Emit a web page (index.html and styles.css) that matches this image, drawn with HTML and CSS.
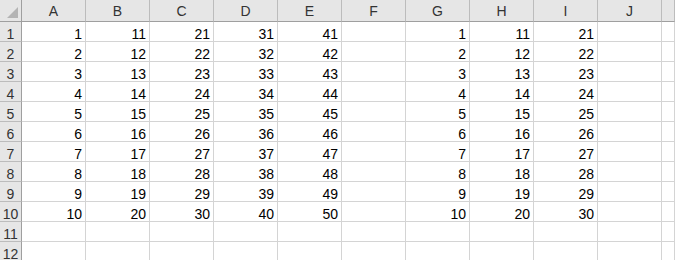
FILE: index.html
```html
<!DOCTYPE html>
<html>
<head>
<meta charset="utf-8">
<link rel="stylesheet" href="styles.css">
</head>
<body>
<div class="sheet">
  <div class="corner"><span class="tri"></span></div>
  <div class="ch">A</div><div class="ch">B</div><div class="ch">C</div><div class="ch">D</div><div class="ch">E</div><div class="ch">F</div><div class="ch">G</div><div class="ch">H</div><div class="ch">I</div><div class="ch">J</div><div class="ch"></div>

  <div class="rh">1</div><div class="c">1</div><div class="c">11</div><div class="c">21</div><div class="c">31</div><div class="c">41</div><div class="c"></div><div class="c">1</div><div class="c">11</div><div class="c">21</div><div class="c"></div><div class="c"></div>
  <div class="rh">2</div><div class="c">2</div><div class="c">12</div><div class="c">22</div><div class="c">32</div><div class="c">42</div><div class="c"></div><div class="c">2</div><div class="c">12</div><div class="c">22</div><div class="c"></div><div class="c"></div>
  <div class="rh">3</div><div class="c">3</div><div class="c">13</div><div class="c">23</div><div class="c">33</div><div class="c">43</div><div class="c"></div><div class="c">3</div><div class="c">13</div><div class="c">23</div><div class="c"></div><div class="c"></div>
  <div class="rh">4</div><div class="c">4</div><div class="c">14</div><div class="c">24</div><div class="c">34</div><div class="c">44</div><div class="c"></div><div class="c">4</div><div class="c">14</div><div class="c">24</div><div class="c"></div><div class="c"></div>
  <div class="rh">5</div><div class="c">5</div><div class="c">15</div><div class="c">25</div><div class="c">35</div><div class="c">45</div><div class="c"></div><div class="c">5</div><div class="c">15</div><div class="c">25</div><div class="c"></div><div class="c"></div>
  <div class="rh">6</div><div class="c">6</div><div class="c">16</div><div class="c">26</div><div class="c">36</div><div class="c">46</div><div class="c"></div><div class="c">6</div><div class="c">16</div><div class="c">26</div><div class="c"></div><div class="c"></div>
  <div class="rh">7</div><div class="c">7</div><div class="c">17</div><div class="c">27</div><div class="c">37</div><div class="c">47</div><div class="c"></div><div class="c">7</div><div class="c">17</div><div class="c">27</div><div class="c"></div><div class="c"></div>
  <div class="rh">8</div><div class="c">8</div><div class="c">18</div><div class="c">28</div><div class="c">38</div><div class="c">48</div><div class="c"></div><div class="c">8</div><div class="c">18</div><div class="c">28</div><div class="c"></div><div class="c"></div>
  <div class="rh">9</div><div class="c">9</div><div class="c">19</div><div class="c">29</div><div class="c">39</div><div class="c">49</div><div class="c"></div><div class="c">9</div><div class="c">19</div><div class="c">29</div><div class="c"></div><div class="c"></div>
  <div class="rh">10</div><div class="c">10</div><div class="c">20</div><div class="c">30</div><div class="c">40</div><div class="c">50</div><div class="c"></div><div class="c">10</div><div class="c">20</div><div class="c">30</div><div class="c"></div><div class="c"></div>
  <div class="rh">11</div><div class="c"></div><div class="c"></div><div class="c"></div><div class="c"></div><div class="c"></div><div class="c"></div><div class="c"></div><div class="c"></div><div class="c"></div><div class="c"></div><div class="c"></div>
  <div class="rh">12</div><div class="c"></div><div class="c"></div><div class="c"></div><div class="c"></div><div class="c"></div><div class="c"></div><div class="c"></div><div class="c"></div><div class="c"></div><div class="c"></div><div class="c"></div>
</div>
</body>
</html>
```
FILE: styles.css
```css
html, body {
  margin: 0;
  padding: 0;
  background: #ffffff;
  overflow: hidden;
}
.sheet {
  display: grid;
  grid-template-columns: 22px repeat(10, 64px) 1fr;
  grid-template-rows: 22px;
  grid-auto-rows: 20px;
  width: 675px;
  font-family: "Liberation Sans", Arial, sans-serif;
  font-size: 14px;
  color: #000;
}
.sheet > div {
  box-sizing: border-box;
  border-right: 1px solid #d4d4d4;
  border-bottom: 1px solid #d4d4d4;
}
.corner {
  position: relative;
  background: #e6e6e6;
  border-right: 1px solid #9f9f9f !important;
  border-bottom: 1px solid #9f9f9f !important;
}
.tri {
  position: absolute;
  right: 3px;
  bottom: 3px;
  width: 0;
  height: 0;
  border-left: 11px solid transparent;
  border-bottom: 11px solid #b4b4b4;
}
.ch {
  background: #e6e6e6;
  color: #333;
  border-right: 1px solid #bcbcbc !important;
  border-bottom: 1px solid #9f9f9f !important;
  display: flex;
  align-items: center;
  justify-content: center;
  line-height: 1;
}
.rh {
  background: #e6e6e6;
  color: #333;
  border-right: 1px solid #9f9f9f !important;
  border-bottom: 1px solid #bcbcbc !important;
  display: flex;
  align-items: flex-end;
  justify-content: center;
  line-height: 14px;
}
.c {
  display: flex;
  align-items: flex-end;
  justify-content: flex-end;
  padding: 0 3px 0 0;
  line-height: 14px;
}
```
